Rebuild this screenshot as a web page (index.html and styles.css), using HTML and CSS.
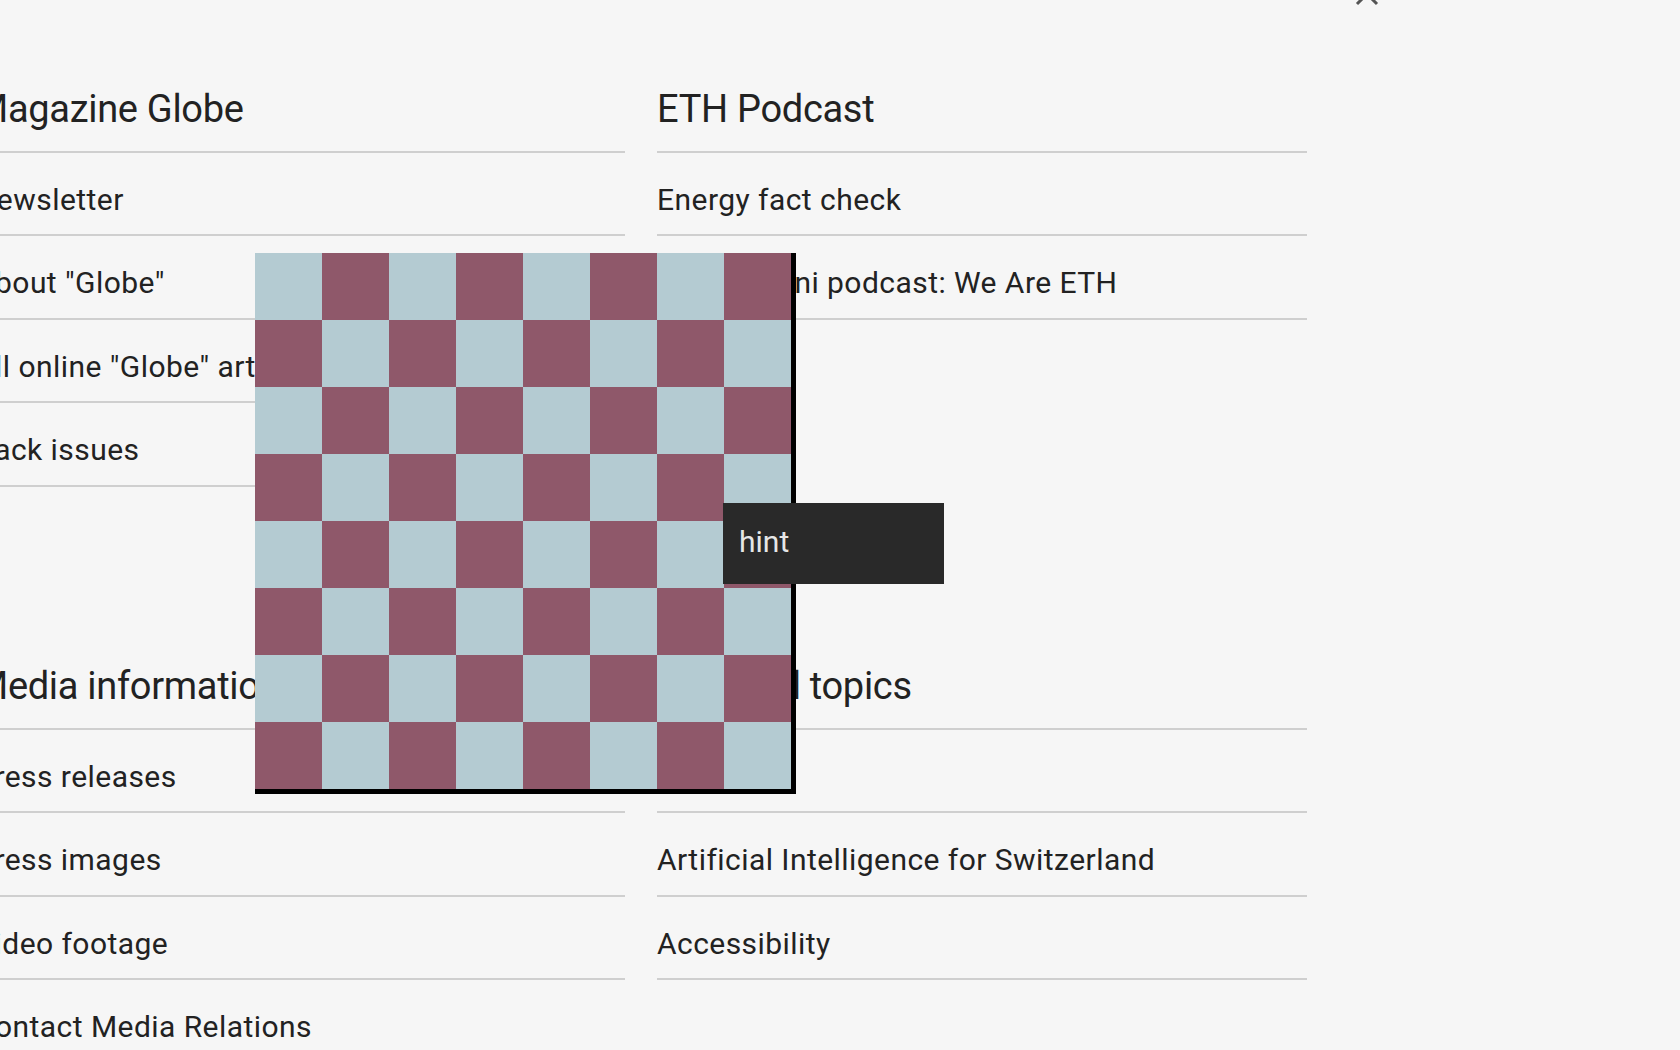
FILE: index.html
```html
<!DOCTYPE html>
<html lang="en">
<head>
<meta charset="utf-8">
<title>News &amp; events</title>
<link rel="stylesheet" href="styles.css">
</head>
<body>
<button class="close" aria-label="Close">
  <svg viewBox="0 0 24 24" width="24" height="24"><path d="M2 2 L22 22 M22 2 L2 22" stroke="#555" stroke-width="3" fill="none"/></svg>
</button>
<div class="menu">
  <section class="group">
    <h2 class="group-title">Magazine Globe</h2>
    <ul class="links">
      <li>Newsletter</li>
      <li>About "Globe"</li>
      <li>All online "Globe" articles</li>
      <li>Back issues</li>
    </ul>
  </section>
  <section class="group">
    <h2 class="group-title">ETH Podcast</h2>
    <ul class="links">
      <li>Energy fact check</li>
      <li>ETH Alumni podcast: We Are ETH</li>
    </ul>
  </section>
  <section class="group">
    <h2 class="group-title">Media information</h2>
    <ul class="links">
      <li>Press releases</li>
      <li>Press images</li>
      <li>Video footage</li>
      <li>Contact Media Relations</li>
    </ul>
  </section>
  <section class="group">
    <h2 class="group-title">Selected topics</h2>
    <ul class="links">
      <li>Climate</li>
      <li>Artificial Intelligence for Switzerland</li>
      <li>Accessibility</li>
    </ul>
  </section>
</div>
<div class="board"></div>
<div class="hint">hint</div>
</body>
</html>
```
FILE: styles.css
```css
html, body {
  margin: 0;
  padding: 0;
  background: #f6f6f6;
  overflow: hidden;
}
body {
  width: 1680px;
  height: 1050px;
  position: relative;
  font-family: Roboto, "Liberation Sans", sans-serif;
  color: #222;
}
.close {
  position: absolute;
  left: 1355px;
  top: -18px;
  width: 24px;
  height: 24px;
  padding: 0;
  border: 0;
  background: none;
}
.close svg { display: block; }
.menu {
  display: grid;
  grid-template-columns: 650px 650px;
  column-gap: 32px;
  row-gap: 175.5px;
  margin-left: -25px;
  padding-top: 85px;
  align-items: start;
}
.group-title {
  margin: 0;
  font-size: 38px;
  font-weight: 400;
  letter-spacing: -0.3px;
  line-height: 48px;
  padding-bottom: 17.5px;
  border-bottom: 2px solid #cfcfcf;
}
.links {
  list-style: none;
  margin: 0;
  padding: 0;
}
.links li {
  font-size: 30px;
  letter-spacing: 0.45px;
  line-height: 36px;
  padding: 29px 0 16.5px;
  border-bottom: 2px solid #cfcfcf;
  white-space: nowrap;
}
.board {
  position: absolute;
  left: 255px;
  top: 253px;
  width: 536px;
  height: 536px;
  background: repeating-conic-gradient(#8f586a 0 25%, #b4cbd2 0 50%) 0 0 / 134px 134px;
  border-right: 5px solid #000;
  border-bottom: 5px solid #000;
}
.hint {
  position: absolute;
  left: 723px;
  top: 503px;
  width: 221px;
  height: 81px;
  box-sizing: border-box;
  padding: 21px 0 0 16px;
  background: #292929;
  color: #e6e6e6;
  font-size: 30px;
  line-height: 36px;
}
```
